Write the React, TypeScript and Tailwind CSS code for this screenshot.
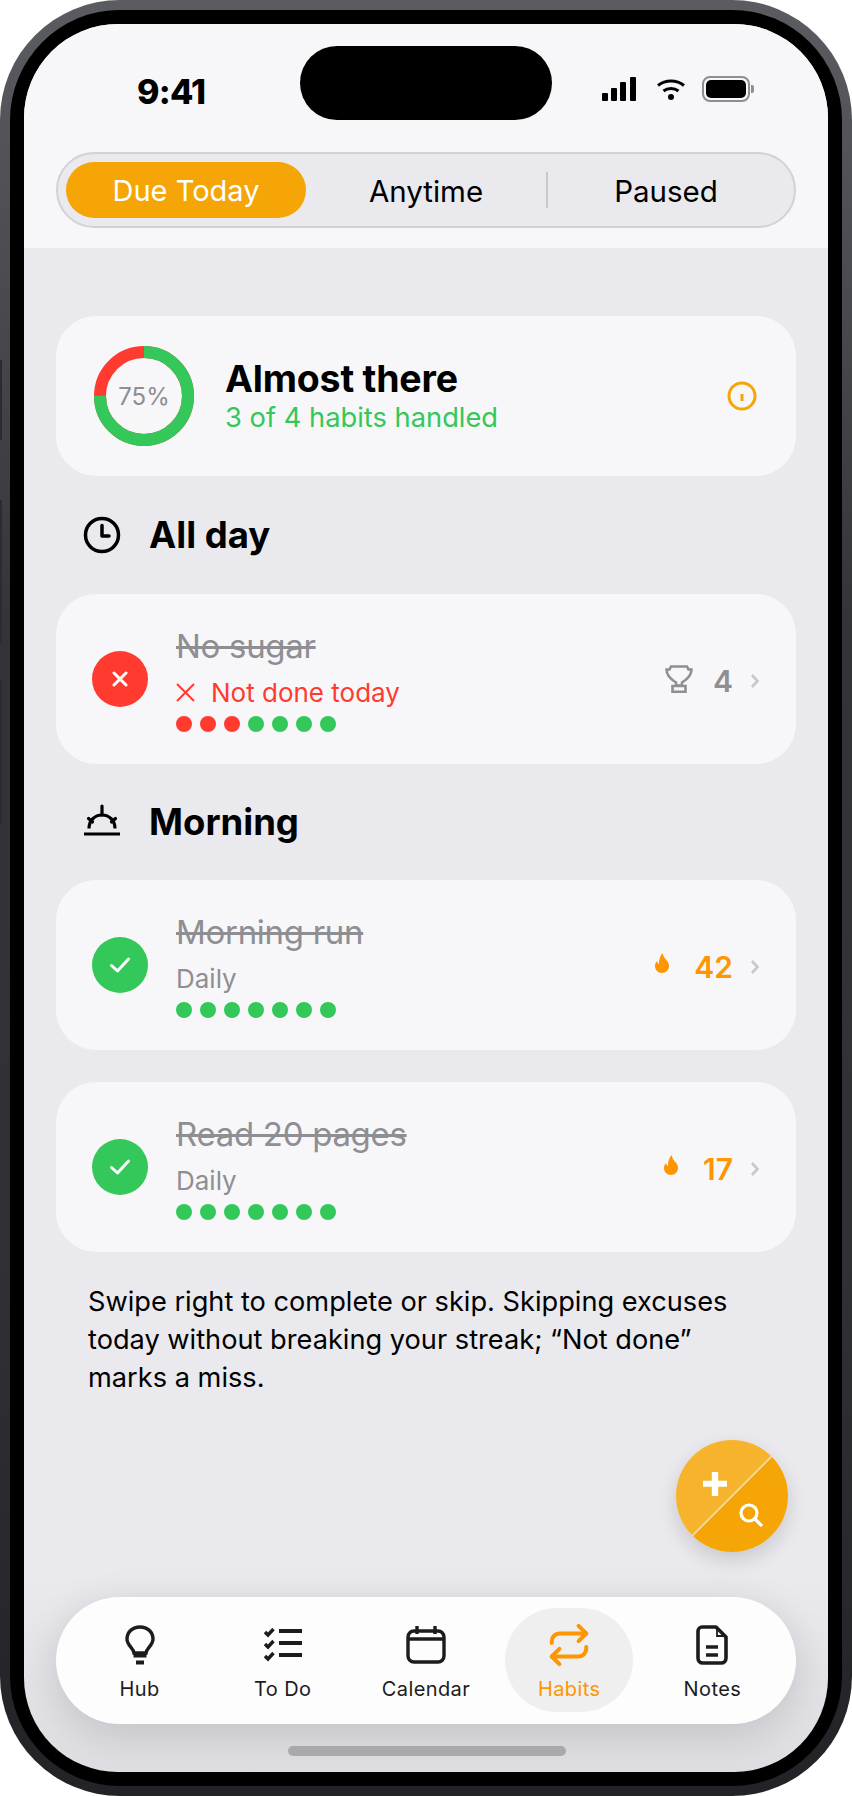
import { Repeat } from "lucide-react";

const GREEN = "#34C759";
const RED = "#FF3B30";

type Habit = {
  name: string;
  status: "done" | "missed";
  sub: string;
  dots: string[];
  count: number;
  trophy?: boolean;
};

const ALL_GREEN = Array(7).fill(GREEN);

const NO_SUGAR: Habit = {
  name: "No sugar",
  status: "missed",
  sub: "Not done today",
  dots: [RED, RED, RED, GREEN, GREEN, GREEN, GREEN],
  count: 4,
  trophy: true,
};
const MORNING_RUN: Habit = { name: "Morning run", status: "done", sub: "Daily", dots: ALL_GREEN, count: 42 };
const READ_PAGES: Habit = { name: "Read 20 pages", status: "done", sub: "Daily", dots: ALL_GREEN, count: 17 };

/* ── Status bar glyphs ── */
function StatusIcons() {
  return (
    <div className="flex items-center">
      <svg width="36" height="26" viewBox="0 0 36 26" fill="#000" aria-hidden="true">
        <rect x="1" y="17" width="6" height="8" rx="1" />
        <rect x="10" y="12" width="6" height="13" rx="1" />
        <rect x="19" y="6" width="6" height="19" rx="1" />
        <rect x="29" y="1" width="6" height="24" rx="1" />
      </svg>
      <svg className="ml-[19px]" width="30" height="24" viewBox="0 0 30 24" fill="none" stroke="#000" strokeWidth="3" aria-hidden="true">
        <path d="M2 8.5C9.5 2.5 20.5 2.5 28 8.5" />
        <path d="M7.5 14C11.8 10.6 18.2 10.6 22.5 14" />
        <circle cx="15" cy="20" r="3" fill="#000" stroke="none" />
      </svg>
      <div className="ml-[16px] flex items-center">
        <div className="h-[26px] w-[48px] rounded-[8px] border-2 border-[#8e8e93] p-[2px]">
          <div className="h-full w-full rounded-[5px] bg-black" />
        </div>
        <div className="ml-[1px] h-[8px] w-[3px] rounded-r-[2px] bg-[#8e8e93]" />
      </div>
    </div>
  );
}

function ProgressRing() {
  const r = 44;
  const c = 2 * Math.PI * r;
  return (
    <div className="relative h-[100px] w-[100px] shrink-0">
      <svg width="100" height="100" viewBox="0 0 100 100" className="-rotate-90" aria-hidden="true">
        <circle cx="50" cy="50" r={r} fill="none" stroke={RED} strokeWidth="12" />
        <circle cx="50" cy="50" r={r} fill="none" stroke={GREEN} strokeWidth="12" strokeDasharray={`${c * 0.75} ${c}`} />
      </svg>
      <div className="absolute inset-0 flex items-center justify-center pt-[2px] text-[24px] text-[#8e8e93]">75%</div>
    </div>
  );
}

function ClockIcon() {
  return (
    <svg width="38" height="38" viewBox="0 0 38 38" fill="none" stroke="#000" strokeWidth="3.5" strokeLinecap="round" strokeLinejoin="round" aria-hidden="true">
      <circle cx="19" cy="19" r="16.5" />
      <path d="M19 9.5V20H26" />
    </svg>
  );
}

function SunriseIcon() {
  return (
    <svg className="mb-[4px]" width="36" height="32" viewBox="0 0 36 32" fill="none" stroke="#000" aria-hidden="true">
      <path d="M0.5 30H35.5" strokeWidth="3" strokeLinecap="round" />
      <path d="M5 24.5C5 16.5 10.8 11 18 11C25.2 11 31 16.5 31 24.5" strokeWidth="3.2" />
      <path d="M18 2V11M4.5 14.5L8.5 18M31.5 14.5L27.5 18" strokeWidth="3.2" strokeLinecap="round" />
    </svg>
  );
}

function TrophyIcon() {
  return (
    <svg className="mb-[4px]" width="28" height="28" viewBox="0 0 28 28" fill="none" stroke="#8e8e93" strokeWidth="2.6" aria-hidden="true">
      <path d="M6 1.5H22L23.5 4.5H26.5C26.5 10 21 15 17 17.5V20.5H11V17.5C7 15 1.5 10 1.5 4.5H4.5Z" />
      <path d="M7.5 21H20.5V26.7H7.5Z" />
    </svg>
  );
}

function FlameIcon() {
  return (
    <svg className="mb-[9px]" width="14" height="20" viewBox="0 0 14 20" fill="#FF9500" aria-hidden="true">
      <path d="M7.5 0C8.5 3 9 4.5 10.5 6C12.5 8 14 10 14 13C14 17 11 20 7 20C3 20 0 17 0 13C0 11 .8 9.2 2 8C2.2 9.5 2.8 10.5 4 11C3.8 7 5 3 7.5 0Z" />
    </svg>
  );
}

function StatusBadge({ status }: { status: Habit["status"] }) {
  return (
    <div className={`flex h-[56px] w-[56px] shrink-0 items-center justify-center rounded-full ${status === "done" ? "bg-[#34C759]" : "bg-[#FF3B30]"}`}>
      {status === "done" ? (
        <svg width="22" height="18" viewBox="0 0 22 18" fill="none" stroke="#fff" strokeWidth="3" strokeLinecap="round" strokeLinejoin="round" aria-hidden="true">
          <path d="M2.5 9.5L8.5 15L19.5 3" />
        </svg>
      ) : (
        <svg width="16" height="16" viewBox="0 0 16 16" fill="none" stroke="#fff" strokeWidth="3" strokeLinecap="round" aria-hidden="true">
          <path d="M2 2L14 14M14 2L2 14" />
        </svg>
      )}
    </div>
  );
}

function HabitCard({ habit }: { habit: Habit }) {
  const missed = habit.status === "missed";
  return (
    <div className="flex h-[170px] items-center rounded-[40px] bg-[#F7F7FA] pl-[36px] pr-[37px]">
      <StatusBadge status={habit.status} />
      <div className="ml-[28px] min-w-0 flex-1">
        <div className="text-[33px] leading-[38px] tracking-[-0.3px] text-[#8e8e93] line-through">{habit.name}</div>
        <div className={`mt-[12px] flex items-center text-[26px] leading-[32px] ${missed ? "text-[#FF3B30]" : "text-[#8e8e93]"}`}>
          {missed && (
            <svg className="mr-[16px]" width="19" height="19" viewBox="0 0 19 19" fill="none" stroke="#FF3B30" strokeWidth="2" aria-hidden="true">
              <path d="M1 1L18 18M18 1L1 18" />
            </svg>
          )}
          {habit.sub}
        </div>
        <div className="mt-[7px] flex gap-[8px]">
          {habit.dots.map((color, i) => (
            <span key={i} className="h-[16px] w-[16px] rounded-full" style={{ backgroundColor: color }} />
          ))}
        </div>
      </div>
      <div className={`flex items-center pt-[4px] ${habit.trophy ? "gap-[20px]" : "gap-[25px]"}`}>
        {habit.trophy ? <TrophyIcon /> : <FlameIcon />}
        <span className={`text-[30px] font-semibold ${habit.trophy ? "text-[#8e8e93]" : "text-[#FF9500]"}`}>{habit.count}</span>
      </div>
      <svg className="ml-[18px] mt-[4px]" width="8" height="14" viewBox="0 0 8 14" fill="none" stroke="#c7c7cc" strokeWidth="2.6" aria-hidden="true">
        <path d="M1 1L6.5 7L1 13" />
      </svg>
    </div>
  );
}

function NavIcon({ name }: { name: string }) {
  switch (name) {
    case "Hub":
      return (
        <svg width="30" height="40" viewBox="0 0 30 40" fill="none" stroke="#1c1c1e" strokeWidth="3.4" aria-hidden="true">
          <path d="M9 28C8.5 23 2 20.5 2 14C2 7 7.5 2 15 2C22.5 2 28 7 28 14C28 20.5 21.5 23 21 28Z" />
          <path d="M8.5 30H21.5" strokeWidth="5" />
          <path d="M11 37.5H19" strokeWidth="4" />
        </svg>
      );
    case "To Do":
      return (
        <svg width="38" height="34" viewBox="0 0 38 34" fill="none" stroke="#1c1c1e" aria-hidden="true">
          <path d="M15 3H38M15 15H38M15 27H38" strokeWidth="4" />
          <path d="M1 4L4 7L9.5 1M1 16L4 19L9.5 13M1 28L4 31L9.5 25" strokeWidth="3.4" />
        </svg>
      );
    case "Calendar":
      return (
        <svg width="40" height="38" viewBox="0 0 40 38" fill="none" stroke="#1c1c1e" strokeWidth="3.4" aria-hidden="true">
          <rect x="2" y="5" width="36" height="31" rx="6" />
          <path d="M2 13H38" />
          <path d="M11 0V8M29 0V8" />
        </svg>
      );
    case "Habits":
      return <Repeat size={46} strokeWidth={2.1} color="#FF9500" absoluteStrokeWidth={false} />;
    default:
      return (
        <svg width="32" height="40" viewBox="0 0 32 40" fill="none" stroke="#1c1c1e" strokeWidth="3.6" aria-hidden="true">
          <path d="M6 2H20L30 12V33C30 36 28 38 25 38H7C4 38 2 36 2 33V6C2 4 4 2 6 2Z" strokeLinejoin="round" />
          <path d="M21 3V11H29" strokeWidth="1.8" />
          <path d="M10 22H22M10 30H22" strokeWidth="3.4" />
        </svg>
      );
  }
}

const NAV_ITEMS = ["Hub", "To Do", "Calendar", "Habits", "Notes"];

export default function App() {
  return (
    <div className="relative h-[1796px] w-[852px] bg-white font-['Inter','Noto_Sans',sans-serif] text-black">
      <div className="h-full w-full rounded-[120px] bg-[linear-gradient(180deg,#5a5c61_0%,#48494d_18%,#333438_35%,#303135_70%,#222327_100%)] p-[10px]">
        <div className="h-full w-full rounded-[110px] bg-black p-[14px]">
          <div className="relative flex h-full w-full flex-col overflow-hidden rounded-[94px] bg-[#E9E9EE]">
            {/* Header with status bar and segmented tabs */}
            <div className="bg-[#F7F7FA] px-[32px] pb-[20px]">
              <div className="relative flex h-[128px] items-start justify-between pl-[81px] pr-[42px]">
                <span className="pt-[46px] text-[34px] font-extrabold leading-[44px] tracking-[-0.8px]">9:41</span>
                <div className="absolute left-[244px] top-[22px] h-[74px] w-[252px] rounded-full bg-black" />
                <div className="pt-[52px]">
                  <StatusIcons />
                </div>
              </div>
              <div className="grid h-[76px] grid-cols-3 items-center rounded-full border-2 border-[#d1d1d6] bg-[#E9E9EE] px-[8px]">
                <div className="flex h-[56px] items-center justify-center rounded-full bg-[#F5A505] pt-[2px] text-[29px] text-white">Due Today</div>
                <div className="mr-[-2px] flex h-[36px] items-center justify-center border-r-2 border-[#c7c7cc] pt-[2px] text-[29.5px]">Anytime</div>
                <div className="flex items-center justify-center pt-[2px] text-[29.5px]">Paused</div>
              </div>
            </div>

            {/* Habit list */}
            <div className="flex flex-col px-[32px] pt-[68px]">
              <div className="flex h-[160px] items-center rounded-[40px] bg-[#F7F7FA] pl-[38px] pr-[39px]">
                <ProgressRing />
                <div className="ml-[31px] flex-1">
                  <div className="text-[37.5px] font-bold leading-[44px] tracking-[-0.2px]">Almost there</div>
                  <div className="text-[27.3px] leading-[34px] text-[#34C759]">3 of 4 habits handled</div>
                </div>
                <svg width="30" height="30" viewBox="0 0 30 30" fill="none" stroke="#F5A505" strokeWidth="3" aria-hidden="true">
                  <circle cx="15" cy="15" r="13" />
                  <path d="M15 13V20" />
                </svg>
              </div>

              <div className="flex h-[118px] items-center pl-[27px]">
                <ClockIcon />
                <span className="ml-[28px] text-[36.5px] font-bold">All day</span>
              </div>
              <HabitCard habit={NO_SUGAR} />

              <div className="flex h-[116px] items-center pl-[28px]">
                <SunriseIcon />
                <span className="ml-[29px] text-[36.5px] font-bold">Morning</span>
              </div>
              <div className="flex flex-col gap-[32px]">
                <HabitCard habit={MORNING_RUN} />
                <HabitCard habit={READ_PAGES} />
              </div>

              <p className="mt-[31px] px-[32px] text-[27.2px] leading-[38px]">
                Swipe right to complete or skip. Skipping excuses today without breaking your streak; “Not done” marks a miss.
              </p>
            </div>

            {/* Split add / search button */}
            <button className="absolute left-[652px] top-[1416px] h-[112px] w-[112px] overflow-hidden rounded-full bg-[linear-gradient(135deg,#F7B32B_0%,#F7B32B_49.2%,#FBD27E_49.2%,#FBD27E_50.8%,#F5A505_50.8%,#F5A505_100%)] shadow-[0_8px_20px_rgba(0,0,0,0.14)]">
              <svg className="absolute left-[26px] top-[31px]" width="26" height="26" viewBox="0 0 26 26" fill="#fff" aria-hidden="true">
                <path d="M9.8 1H16.2V9.8H25V15.8H16.2V25H9.8V15.8H1V9.8H9.8Z" />
              </svg>
              <svg className="absolute left-[63px] top-[63px]" width="24" height="24" viewBox="0 0 24 24" fill="none" stroke="#fff" strokeWidth="3.2" aria-hidden="true">
                <circle cx="10" cy="10" r="8" />
                <path d="M15.5 15.5L23 23" />
              </svg>
            </button>

            {/* Bottom navigation */}
            <div className="absolute bottom-0 left-0 h-[200px] w-full bg-[linear-gradient(180deg,rgba(0,0,0,0)_0%,rgba(0,0,0,0.05)_100%)]" />
            <nav className="absolute left-[32px] top-[1573px] grid h-[127px] w-[740px] grid-cols-5 rounded-full bg-[#FDFDFD] px-[12px] py-[11px] shadow-[0_10px_40px_rgba(0,0,0,0.14)]">
              {NAV_ITEMS.map((name) => {
                const active = name === "Habits";
                return (
                  <div key={name} className="flex justify-center">
                    <div className={`flex h-[104px] w-[128px] flex-col items-center rounded-[52px] pt-[16px] ${active ? "bg-[#EFEFEF]" : ""}`}>
                      <div className="flex h-[42px] items-center justify-center">
                        <NavIcon name={name} />
                      </div>
                      <span className={`mt-[11px] text-[20px] font-normal leading-[24px] tracking-[0.4px] ${active ? "text-[#FF9500]" : "text-[#1c1c1e]"}`}>{name}</span>
                    </div>
                  </div>
                );
              })}
            </nav>
            <div className="absolute left-[264px] top-[1722px] h-[10px] w-[278px] rounded-full bg-[#a9a9ad]" />
          </div>
        </div>
      </div>
      {/* Side buttons, barely showing on the frame edge */}
      <div className="absolute left-0 top-[360px] h-[80px] w-[2px] bg-[#2b2c30]" />
      <div className="absolute left-0 top-[500px] h-[144px] w-[2px] bg-[#2b2c30]" />
      <div className="absolute left-0 top-[680px] h-[144px] w-[2px] bg-[#2b2c30]" />
    </div>
  );
}
